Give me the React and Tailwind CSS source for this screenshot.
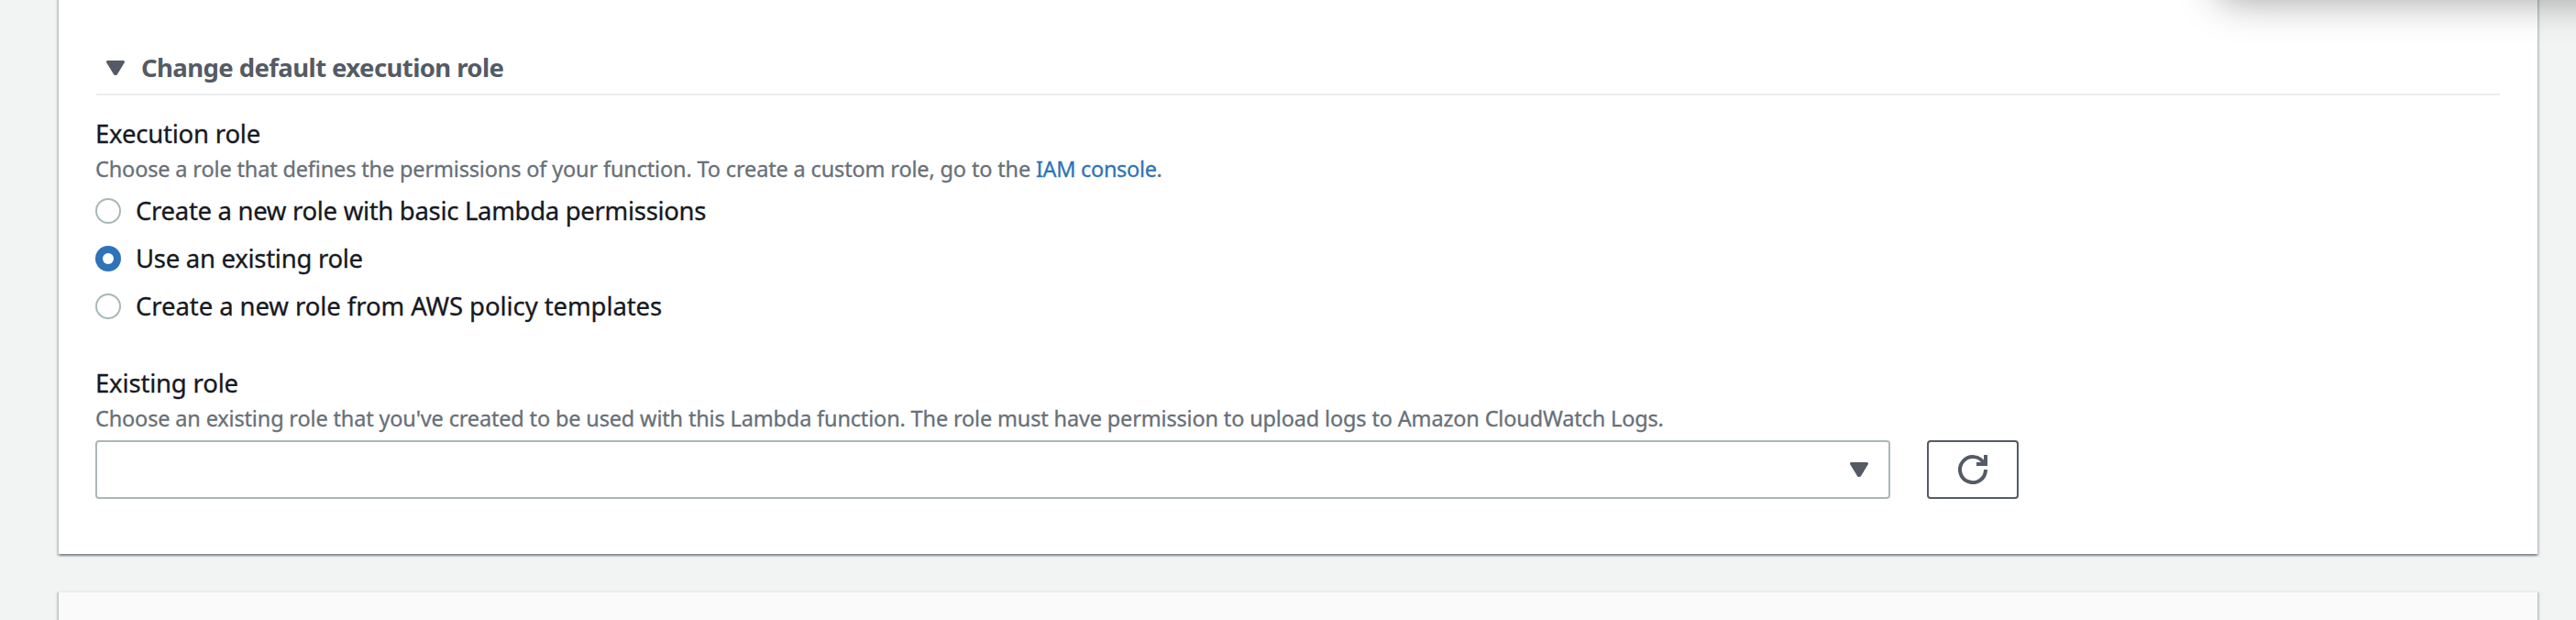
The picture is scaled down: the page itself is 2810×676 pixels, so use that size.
const CARD_SHADOW =
  "shadow-[0_2px_2px_0_rgba(0,28,36,0.3),2px_2px_2px_0_rgba(0,28,36,0.15),-2px_2px_2px_0_rgba(0,28,36,0.15)]";

const LABEL = "whitespace-pre text-[27.5px] leading-[44px] text-[#16191f] [-webkit-text-stroke:0.3px_#16191f]";
const HINT = "whitespace-pre text-[23.5px] leading-[32px] text-[#687078] [-webkit-text-stroke:0.3px_#687078]";

function Caret({ className }) {
  return (
    <svg viewBox="0 0 20 16" className={className} aria-hidden="true">
      <path d="M1.5 1.5h17L10.6 14.5h-1.2z" fill="#545b64" stroke="#545b64" strokeWidth="3" strokeLinejoin="round" />
    </svg>
  );
}

function RefreshIcon() {
  return (
    <svg viewBox="0 0 32 32" className="h-8 w-8" fill="none" stroke="#545b64" strokeWidth="4" aria-hidden="true">
      <path d="M30 16A14 14 0 1 1 28.2 9.2" />
      <path d="M30 0v10H20" />
    </svg>
  );
}

function Radio({ label, checked, tracking }) {
  return (
    <label className="flex h-11 items-center gap-4">
      <span
        className={
          checked
            ? "flex h-7 w-7 items-center justify-center rounded-full bg-[#2e73b8]"
            : "h-7 w-7 rounded-full border-2 border-[#aab7b8] bg-white"
        }
      >
        {checked && <span className="h-3 w-3 rounded-full bg-white" />}
      </span>
      <span className={`${LABEL} ${tracking}`}>{label}</span>
    </label>
  );
}

export default function App() {
  return (
    <div className="relative flex h-[676px] w-[2810px] flex-col overflow-hidden bg-[#f2f3f3] pr-[42px] pl-16 font-['Noto_Sans',sans-serif]">
      <section className={`-mt-4 h-[620px] shrink-0 bg-white px-10 pt-[67px] ${CARD_SHADOW}`}>
        <header className="flex h-[53px] items-start border-x-2 border-b-2 border-x-transparent border-b-[#eaeded] pl-[10px]">
          <Caret className="mt-[15px] h-4 w-5" />
          <h2 className="mt-px ml-[18px] text-[27.5px] leading-[44px] font-bold tracking-[-0.59px] whitespace-pre text-[#545b64]">
            Change default execution role
          </h2>
        </header>

        <div className="pt-5">
          <h3 className={`${LABEL} tracking-[-0.2px]`}>Execution role</h3>
          <p className={`flex ${HINT}`}>
            <span className="tracking-[-0.154px]">
              {"Choose a role that defines the permissions of your function. To create a custom role, go to the "}
            </span>
            <a className="tracking-[-0.33px] text-[#2e73b8] [-webkit-text-stroke:0.3px_#2e73b8]">IAM console</a>
            <span>.</span>
          </p>
          <div className="mt-2 flex flex-col gap-2">
            <Radio label="Create a new role with basic Lambda permissions" tracking="tracking-[-0.31px]" />
            <Radio label="Use an existing role" tracking="tracking-[-0.28px]" checked />
            <Radio label="Create a new role from AWS policy templates" tracking="tracking-[-0.08px]" />
          </div>
        </div>

        <div className="pt-10">
          <h3 className={`${LABEL} tracking-[-0.18px]`}>Existing role</h3>
          <p className={`${HINT} tracking-[-0.16px]`}>
            Choose an existing role that you've created to be used with this Lambda function. The role must have
            permission to upload logs to Amazon CloudWatch Logs.
          </p>
          <div className="mt-2 flex gap-10">
            <div className="flex h-16 w-[1958px] items-center justify-end rounded-[4px] border-2 border-[#aab7b8] bg-white pr-[22px]">
              <Caret className="h-4 w-5" />
            </div>
            <button className="flex h-16 w-[100px] items-center justify-center rounded-[4px] border-2 border-[#545b64] bg-white">
              <RefreshIcon />
            </button>
          </div>
        </div>
      </section>

      <section className={`mt-10 h-40 shrink-0 border-t-2 border-[#eaeded] bg-[#fafafa] ${CARD_SHADOW}`} />

      <div className="absolute -top-[108px] left-[2420px] h-[100px] w-[600px] rounded-2xl shadow-[0_8px_44px_rgba(0,0,0,0.38)]" />
    </div>
  );
}
